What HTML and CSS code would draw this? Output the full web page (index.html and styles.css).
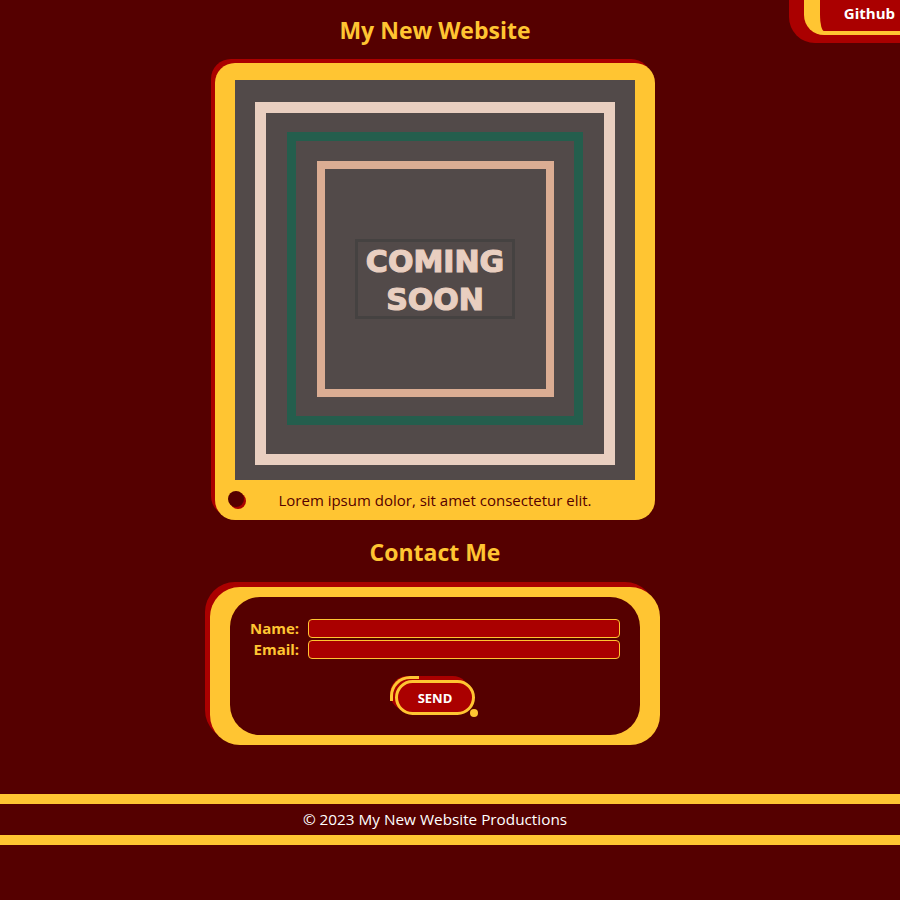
FILE: index.html
```html
<!DOCTYPE html>
<html lang="en">
<head>
<meta charset="utf-8">
<title>My New Website</title>
<link rel="stylesheet" href="styles.css">
</head>
<body>
<a class="github" href="#"><span class="github-inner">Github</span></a>
<main class="main">
  <h1 class="title">My New Website</h1>
  <section class="card">
    <div class="art">
      <div class="sq1">
        <div class="sq2">
          <div class="sq3">
            <div class="soon">COMING<br>SOON</div>
          </div>
        </div>
      </div>
    </div>
    <div class="caption">
      <span class="dot"></span>
      <p class="caption-text">Lorem ipsum dolor, sit amet consectetur elit.</p>
    </div>
  </section>
  <h2 class="title">Contact Me</h2>
  <section class="form-card">
    <form class="form">
      <div class="fields">
        <label class="label" for="name">Name:</label>
        <input class="input" id="name" type="text">
        <label class="label" for="email">Email:</label>
        <input class="input" id="email" type="email">
      </div>
      <div class="actions">
        <button class="send" type="button">SEND</button>
      </div>
    </form>
  </section>
</main>
<footer class="footer">© 2023 My New Website Productions</footer>
</body>
</html>
```
FILE: styles.css
```css
* { box-sizing: border-box; }
html, body { margin: 0; padding: 0; }
body {
  background: #550000;
  font-family: "Open Sans", "Noto Sans", sans-serif;
  min-height: 900px;
  position: relative;
}
.github {
  position: absolute;
  top: 0;
  right: 0;
  background: #aa0000;
  padding: 0 0 8px 15px;
  border-bottom-left-radius: 26px;
  text-decoration: none;
}
.github-inner {
  display: block;
  background: #aa0000;
  border-left: 16px solid #ffc532;
  border-bottom: 4px solid #ffc532;
  border-bottom-left-radius: 20px;
  padding: 2px 5px 7px 24px;
  color: #fff;
  font-weight: 700;
  font-size: 15px;
  line-height: 22px;
}
.main {
  padding-right: 30px;
  display: flex;
  flex-direction: column;
  align-items: center;
}
.title {
  color: #ffc532;
  font-size: 23px;
  line-height: 30px;
  font-weight: 700;
  margin: 15px 0 18px;
}
h2.title { margin: 17px 0 20px; }
.card {
  width: 440px;
  background: #ffc532;
  border-radius: 20px;
  padding: 17px 20px 0;
  box-shadow: -4px -4px 0 #aa0000;
}
.art {
  width: 400px;
  height: 400px;
  background: #524a49;
  display: flex;
  justify-content: center;
  align-items: flex-start;
  padding-top: 22px;
}
.sq1 {
  width: 360px;
  height: 363px;
  border: 11px solid #e9cfc0;
  display: flex;
  justify-content: center;
  align-items: flex-start;
  padding-top: 19px;
}
.sq2 {
  width: 296px;
  height: 293px;
  border: 9px solid #245e4d;
  display: flex;
  justify-content: center;
  align-items: center;
}
.sq3 {
  width: 237px;
  height: 236px;
  border: 8px solid #dbad93;
  display: flex;
  justify-content: center;
  align-items: center;
}
.soon {
  width: 160px;
  height: 80px;
  border: 3px solid #454241;
  color: #e9cfc0;
  font-family: "DejaVu Sans", sans-serif;
  font-weight: 700;
  font-size: 30px;
  line-height: 38px;
  text-align: center;
  -webkit-text-stroke: 1.2px #e9cfc0;
  padding-top: 1px;
}
.caption {
  position: relative;
  height: 40px;
  display: flex;
  align-items: center;
  justify-content: center;
}
.dot {
  position: absolute;
  left: -7px;
  top: 11px;
  width: 16px;
  height: 16px;
  border-radius: 50%;
  background: #550000;
  box-shadow: 2px 2px 0 #aa0000;
}
.caption-text {
  margin: 0;
  color: #550000;
  font-size: 15px;
  line-height: 20px;
}
.form-card {
  width: 450px;
  background: #ffc532;
  border-radius: 30px;
  padding: 10px 20px;
  box-shadow: -5px -5px 0 #aa0000;
}
.form {
  background: #550000;
  border-radius: 30px;
  padding: 22px 20px 20px;
}
.fields {
  display: grid;
  grid-template-columns: auto 1fr;
  column-gap: 9px;
  row-gap: 2px;
  align-items: center;
}
.label {
  color: #ffc532;
  font-weight: 700;
  font-size: 15px;
  line-height: 19px;
  text-align: right;
}
.input {
  height: 19px;
  background: #aa0000;
  border: 1px solid #ffc532;
  border-radius: 4px;
  margin: 0;
  padding: 0 4px;
  color: #fff;
}
.actions {
  display: flex;
  justify-content: center;
  margin-top: 21px;
}
.send {
  position: relative;
  width: 80px;
  height: 35px;
  background: #aa0000;
  border: 3px solid #ffc532;
  border-radius: 18px;
  box-shadow: -5px -4px 0 #aa0000;
  color: #fff;
  font-family: "Open Sans", sans-serif;
  font-weight: 700;
  font-size: 13px;
  padding: 0;
  cursor: pointer;
}
.send::before {
  content: "";
  position: absolute;
  left: -8px;
  top: -7px;
  width: 26px;
  height: 22px;
  border-top: 3px solid #ffc532;
  border-left: 3px solid #ffc532;
  border-top-left-radius: 20px;
}
.send::after {
  content: "";
  position: absolute;
  right: -6px;
  bottom: -5px;
  width: 8px;
  height: 8px;
  border-radius: 50%;
  background: #ffc532;
}
.footer {
  margin-top: 49px;
  border-top: 10px solid #ffc532;
  border-bottom: 10px solid #ffc532;
  height: 51px;
  padding-right: 30px;
  color: #fff;
  font-size: 15.3px;
  line-height: 31px;
  text-align: center;
}
```
